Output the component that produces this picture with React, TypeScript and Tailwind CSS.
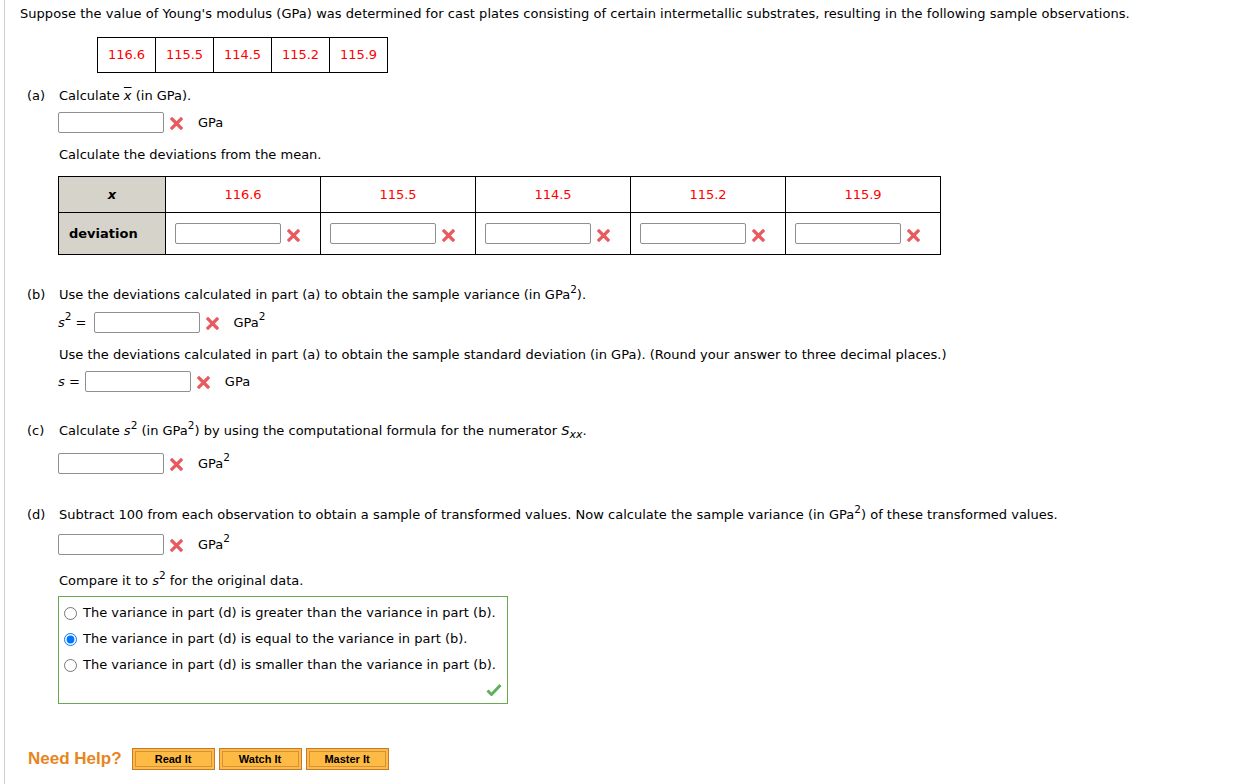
import React from 'react';

const XMark: React.FC = () => (
  <svg width="13" height="13" viewBox="0 0 13 13" className="inline-block shrink-0">
    <path d="M2 2 L11 11 M11 2 L2 11" stroke="#e85a5e" strokeWidth="3.2" strokeLinecap="square" />
  </svg>
);

const Check: React.FC = () => (
  <svg width="16" height="14" viewBox="0 0 16 14">
    <path d="M1.5 7.5 L5.5 11.5 L14.5 2" fill="none" stroke="#5eb05a" strokeWidth="3" strokeLinejoin="round" />
  </svg>
);

const Box: React.FC<{ className?: string }> = ({ className = '' }) => (
  <div className={`w-[106px] h-[21px] border border-[#8f8f8f] rounded-[2px] bg-white shrink-0 ${className}`} />
);

const Sup: React.FC<{ children: React.ReactNode }> = ({ children }) => (
  <sup className="text-[10.5px] top-[-0.6em]">{children}</sup>
);

const Answer: React.FC<{ unit: React.ReactNode; prefix?: React.ReactNode }> = ({ unit, prefix }) => (
  <div className="flex items-center h-[21px]">
    {prefix}
    <Box />
    <span className="ml-[6px]"><XMark /></span>
    <span className="ml-[15px]">{unit}</span>
  </div>
);

const Part: React.FC<{ label: string; children: React.ReactNode; className?: string }> = ({ label, children, className = '' }) => (
  <div className={`flex ${className}`}>
    <div className="w-[39px] pl-[7px] shrink-0">({label})</div>
    <div className="flex-1">{children}</div>
  </div>
);

const data = ['116.6', '115.5', '114.5', '115.2', '115.9'];

const options = [
  'The variance in part (d) is greater than the variance in part (b).',
  'The variance in part (d) is equal to the variance in part (b).',
  'The variance in part (d) is smaller than the variance in part (b).',
];

const HelpButton: React.FC<{ label: string }> = ({ label }) => (
  <div className="w-[83px] h-[22px] border border-[#c47a2c] bg-[#fdbb45] p-[2px]">
    <div className="h-full border border-[#d4923a] flex items-center justify-center text-[11px] font-bold text-black font-['Liberation_Sans',Arial,sans-serif]">
      {label}
    </div>
  </div>
);

export default function App() {
  return (
    <div className="min-h-screen bg-white pl-[4px] font-['DejaVu_Sans',Verdana,sans-serif] text-[13px] leading-[16px] text-black">
      <div className="border-l border-[#cfcfcf] min-h-[784px] pl-[15px] pt-[6px]">
        <p className="tracking-[0.04px]">
          Suppose the value of Young's modulus (GPa) was determined for cast plates consisting of certain intermetallic substrates, resulting in the following sample observations.
        </p>

        {/* observations */}
        <table className="ml-[77px] mt-[15px] border-collapse">
          <tbody>
            <tr>
              {data.map((d) => (
                <td key={d} className="border border-black w-[58px] h-[35px] text-center text-[#f00]">{d}</td>
              ))}
            </tr>
          </tbody>
        </table>

        <Part label="a" className="mt-[15px]">
          <p>Calculate <i className="overline">x</i> (in GPa).</p>
          <div className="mt-[8px] -ml-[1px]">
            <Answer unit="GPa" />
          </div>
          <p className="mt-[14px]">Calculate the deviations from the mean.</p>
          <table className="mt-[13px] -ml-[1px] border-collapse">
            <tbody>
              <tr className="h-[36px]">
                <td className="border border-black bg-[#d6d3ca] w-[107px] text-center font-bold italic">x</td>
                {data.map((d) => (
                  <td key={d} className="border border-black w-[155px] text-center text-[#f00]">{d}</td>
                ))}
              </tr>
              <tr className="h-[42px]">
                <td className="border border-black bg-[#d6d3ca] pl-[10px] font-bold">deviation</td>
                {data.map((d) => (
                  <td key={d} className="border border-black pl-[9px]">
                    <div className="flex items-center">
                      <Box />
                      <span className="ml-[6px] mt-[3px]"><XMark /></span>
                    </div>
                  </td>
                ))}
              </tr>
            </tbody>
          </table>
        </Part>

        <Part label="b" className="mt-[32px]">
          <p>Use the deviations calculated in part (a) to obtain the sample variance (in GPa<Sup>2</Sup>).</p>
          <div className="mt-[9px] -ml-[1px]">
            <Answer prefix={<span className="mr-[7px]"><i>s</i><Sup>2</Sup> =</span>} unit={<span>GPa<Sup>2</Sup></span>} />
          </div>
          <p className="mt-[14px]">Use the deviations calculated in part (a) to obtain the sample standard deviation (in GPa). (Round your answer to three decimal places.)</p>
          <div className="mt-[8px] -ml-[1px]">
            <Answer prefix={<span className="mr-[5px]"><i>s</i> =</span>} unit="GPa" />
          </div>
        </Part>

        <Part label="c" className="mt-[31px]">
          <p>
            Calculate <i>s</i><Sup>2</Sup> (in GPa<Sup>2</Sup>) by using the computational formula for the numerator <i>S</i>
            <sub className="text-[11px] italic">xx</sub>.
          </p>
          <div className="mt-[14px] -ml-[1px]">
            <Answer unit={<span>GPa<Sup>2</Sup></span>} />
          </div>
        </Part>

        <Part label="d" className="mt-[33px]">
          <p>Subtract 100 from each observation to obtain a sample of transformed values. Now calculate the sample variance (in GPa<Sup>2</Sup>) of these transformed values.</p>
          <div className="mt-[11px] -ml-[1px]">
            <Answer unit={<span>GPa<Sup>2</Sup></span>} />
          </div>
          <p className="mt-[18px]">Compare it to <i>s</i><Sup>2</Sup> for the original data.</p>
          <div className="mt-[7px] -ml-[1px] w-[450px] border border-[#6aa84f] pt-[3px] pb-[6px] pl-[4px] pr-[5px]">
            {options.map((o, i) => (
              <label key={o} className="flex items-center h-[26px]">
                <input type="radio" name="cmp" defaultChecked={i === 1} className="w-[13px] h-[13px] m-0 ml-[1px] mr-[6px]" />
                <span>{o}</span>
              </label>
            ))}
            <div className="flex justify-end mt-[5px]">
              <Check />
            </div>
          </div>
        </Part>

        <div className="flex items-center mt-[44px] ml-[8px] pb-[10px]">
          <span className="text-[17px] font-bold text-[#e8851c] font-['Liberation_Sans',Arial,sans-serif] mr-[10px]">Need Help?</span>
          <div className="flex gap-[4px]">
            <HelpButton label="Read It" />
            <HelpButton label="Watch It" />
            <HelpButton label="Master It" />
          </div>
        </div>
      </div>
    </div>
  );
}
